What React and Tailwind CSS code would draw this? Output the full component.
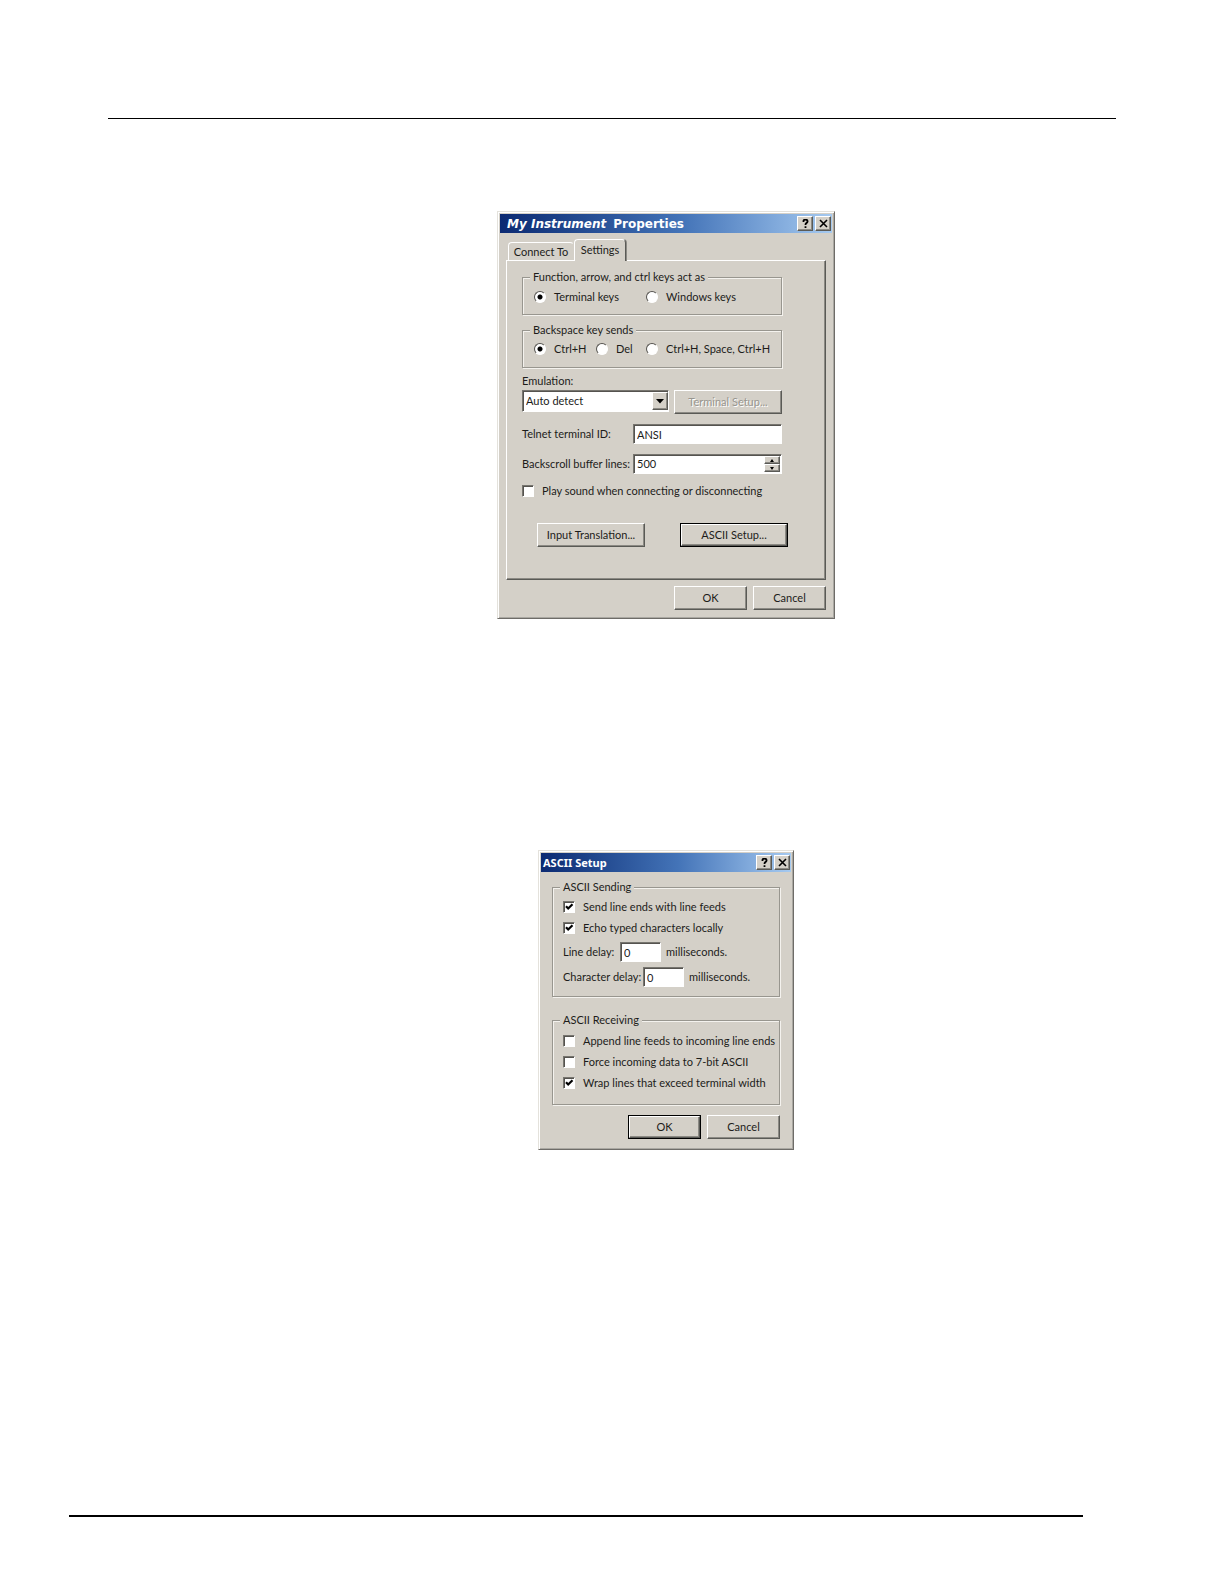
import { useId, useState } from 'react';

const RAISED = 'border border-t-white border-l-white border-r-[#5a5a56] border-b-[#5a5a56] shadow-[inset_-1px_-1px_0_#8c8a84]';
const SUNKEN = 'border border-t-[#77756f] border-l-[#77756f] border-r-white border-b-white bg-white shadow-[inset_1px_1px_0_#55534f]';

export default function App() {
    return (
        <div className="flex min-h-screen flex-col bg-white font-[Lato,'Liberation_Sans',sans-serif] text-[11px] leading-[14px] text-[#1c1c1a]">
            <hr className="mx-[108px] mt-[118px] border-t border-black" />
            <main className="flex flex-col items-center pl-[108px]">
                <PropertiesDialog />
                <AsciiDialog />
            </main>
            <hr className="mt-auto mr-[141px] mb-[67px] ml-[69px] border-t-2 border-black" />
        </div>
    );
}

function PropertiesDialog() {
    const [keys, setKeys] = useState('terminal');
    const [backspace, setBackspace] = useState('ctrlh');
    const [lines, setLines] = useState(500);

    return (
        <Dialog
            className="mt-[92px] w-[338px]"
            title={<><em>My Instrument</em><span className="ml-[7px]">Properties</span></>}
            titleClass="pl-[7px] font-['DejaVu_Sans',Verdana,sans-serif] text-[12px]"
        >
            <div className="px-[6px] pt-[6px] pb-[6px]">
                <div role="tablist" className="flex items-end pl-[2px]">
                    <button role="tab" aria-selected="false" className="h-[18px] w-[66px] rounded-t-sm border border-b-0 border-t-white border-l-white border-r-transparent whitespace-nowrap">
                        Connect To
                    </button>
                    <button role="tab" aria-selected="true" className="z-10 -mb-px h-[22px] w-[52px] rounded-t-sm border border-b-0 border-t-white border-l-white border-r-[#5a5a56] bg-[#d4d0c8] pb-[2px] shadow-[1px_0_0_#8c8a84]">
                        Settings
                    </button>
                </div>
                <div role="tabpanel" className={`${RAISED} flex flex-col pt-[9px] pr-[43px] pb-8 pl-[15px]`}>
                    <Group legend="Function, arrow, and ctrl keys act as" className="h-[45px]">
                        <div className="flex pt-[6px] pl-[11px]">
                            <Radio className="w-[112px]" name="keys" label="Terminal keys" checked={keys === 'terminal'} onChange={() => setKeys('terminal')} />
                            <Radio name="keys" label="Windows keys" checked={keys === 'windows'} onChange={() => setKeys('windows')} />
                        </div>
                    </Group>
                    <Group legend="Backspace key sends" className="mt-2 h-[45px]">
                        <div className="flex pt-[5px] pl-[11px]">
                            <Radio className="w-[62px]" name="backspace" label="Ctrl+H" checked={backspace === 'ctrlh'} onChange={() => setBackspace('ctrlh')} />
                            <Radio className="w-[50px]" name="backspace" label="Del" checked={backspace === 'del'} onChange={() => setBackspace('del')} />
                            <Radio name="backspace" label="Ctrl+H, Space, Ctrl+H" checked={backspace === 'space'} onChange={() => setBackspace('space')} />
                        </div>
                    </Group>

                    <label htmlFor="emulation" className="mt-[6px]">Emulation:</label>
                    <div className="mt-[2px] flex gap-[5px]">
                        <div className="relative flex-1">
                            <select id="emulation" className={`${SUNKEN} h-[22px] w-full appearance-none pl-[3px]`}>
                                <option>Auto detect</option>
                                <option>ANSI</option>
                                <option>VT100</option>
                            </select>
                            <span className={`${RAISED} pointer-events-none absolute top-[2px] right-px flex h-[18px] w-4 items-center justify-center bg-[#d4d0c8]`}>
                                <svg width="8" height="5" viewBox="0 0 8 5"><path d="M0 0h8L4 4.5z" fill="#000" /></svg>
                            </span>
                        </div>
                        <Button className="w-[108px]" disabled>Terminal Setup...</Button>
                    </div>

                    <div className="mt-[10px] flex items-center">
                        <label htmlFor="telnet" className="w-[111px]">Telnet terminal ID:</label>
                        <input id="telnet" defaultValue="ANSI" className={`${SUNKEN} h-5 min-w-0 flex-1 px-[3px]`} />
                    </div>
                    <div className="mt-[10px] flex items-center">
                        <label htmlFor="backscroll" className="w-[111px] whitespace-nowrap">Backscroll buffer lines:</label>
                        <div className={`${SUNKEN} flex h-5 min-w-0 flex-1 p-px`}>
                            <input
                                id="backscroll"
                                value={lines}
                                onChange={(e) => setLines(Number(e.target.value) || 0)}
                                className="min-w-0 flex-1 bg-transparent px-[2px] outline-none"
                            />
                            <div className="flex w-4 flex-col">
                                <SpinButton label="More lines" d="M0 3h4L2 0z" onClick={() => setLines(lines + 1)} />
                                <SpinButton label="Fewer lines" d="M0 0h4L2 3z" onClick={() => setLines(Math.max(0, lines - 1))} />
                            </div>
                        </div>
                    </div>
                    <Check className="mt-[10px]" label="Play sound when connecting or disconnecting" />

                    <div className="mt-[25px] -mr-[6px] flex justify-between pl-[15px]">
                        <Button className="w-[108px]">Input Translation...</Button>
                        <Button className="w-[108px]" primary>ASCII Setup...</Button>
                    </div>
                </div>
                <div className="mt-[6px] flex justify-end gap-[6px]">
                    <Button className="w-[73px]">OK</Button>
                    <Button className="w-[73px]">Cancel</Button>
                </div>
            </div>
        </Dialog>
    );
}

function AsciiDialog() {
    return (
        <Dialog className="mt-[231px] w-[256px]" title="ASCII Setup" titleClass="pl-[2px] font-['Noto_Sans',Tahoma,sans-serif] text-[11px]">
            <div className="px-[11px] pt-2 pb-2">
                <Group legend="ASCII Sending" className="h-[117px]">
                    <div className="flex flex-col pt-[6px] pl-[10px]">
                        <Check label="Send line ends with line feeds" defaultChecked />
                        <Check className="mt-[7px]" label="Echo typed characters locally" defaultChecked />
                        <Delay className="mt-[7px]" label="Line delay:" labelClass="w-[57px]" />
                        <Delay className="mt-[5px]" label="Character delay:" labelClass="w-[80px]" />
                    </div>
                </Group>
                <Group legend="ASCII Receiving" className="mt-4 h-[92px]">
                    <div className="flex flex-col gap-[7px] pt-[7px] pl-[10px]">
                        <Check label="Append line feeds to incoming line ends" />
                        <Check label="Force incoming data to 7-bit ASCII" />
                        <Check label="Wrap lines that exceed terminal width" defaultChecked />
                    </div>
                </Group>
                <div className="mt-[10px] flex justify-end gap-[6px]">
                    <Button className="w-[73px]" primary>OK</Button>
                    <Button className="w-[73px]">Cancel</Button>
                </div>
            </div>
        </Dialog>
    );
}

function Dialog({ className, title, titleClass, children }) {
    return (
        <section className={`border border-[#e4e2dc] border-r-[#6e6c68] border-b-[#6e6c68] bg-[#d4d0c8] p-[2px] shadow-[inset_1px_1px_0_#fff,inset_-1px_-1px_0_#aaa8a2] ${className}`}>
            <header className={`flex h-[19px] items-center bg-linear-to-r from-[#0c2a72] via-[#4474b8] via-55% to-[#a6caf0] pr-px font-bold text-white ${titleClass}`}>
                <h2 className="flex-1 whitespace-nowrap">{title}</h2>
                <TitleButton label="Help">
                    <path d="M2.5 3V1.8Q2.8.5 4.5.5T6.6 2.3Q6.6 3.4 5.4 4.1 4.5 4.7 4.5 6M4.5 7.2V9" fill="none" stroke="#000" strokeWidth="1.8" />
                </TitleButton>
                <TitleButton label="Close" className="ml-[2px]">
                    <path d="M1 1l7 7M8 1L1 8" fill="none" stroke="#000" strokeWidth="1.6" />
                </TitleButton>
            </header>
            {children}
        </section>
    );
}

function TitleButton({ label, className = '', children }) {
    return (
        <button aria-label={label} className={`${RAISED} flex h-[15px] w-4 items-center justify-center bg-[#d4d0c8] ${className}`}>
            <svg width="9" height="9" viewBox="0 0 9 9">{children}</svg>
        </button>
    );
}

function Group({ legend, className, children }) {
    return (
        <fieldset className={`border border-[#98968f] shadow-[1px_1px_0_#f4f2ee,inset_1px_1px_0_#f4f2ee] ${className}`}>
            <legend className="ml-[7px] bg-[#d4d0c8] px-[3px]">{legend}</legend>
            {children}
        </fieldset>
    );
}

function Radio({ label, className = '', ...props }) {
    const id = useId();
    return (
        <div className={`flex items-center gap-2 whitespace-nowrap ${className}`}>
            <input
                type="radio"
                id={id}
                className="size-3 shrink-0 appearance-none rounded-full border border-t-[#55534f] border-l-[#55534f] border-r-white border-b-white bg-white checked:bg-[radial-gradient(circle,#000_2px,#fff_3px)]"
                {...props}
            />
            <label htmlFor={id}>{label}</label>
        </div>
    );
}

function Check({ label, className = '', defaultChecked }) {
    const id = useId();
    return (
        <div className={`flex items-center whitespace-nowrap ${className}`}>
            <span className="relative flex shrink-0">
                <input type="checkbox" id={id} defaultChecked={defaultChecked} className={`${SUNKEN} peer size-3 appearance-none`} />
                <svg className="pointer-events-none absolute inset-0 hidden peer-checked:block" width="12" height="12" viewBox="0 0 12 12">
                    <path d="M3 5.2l2.2 2.3L9.5 3.2" fill="none" stroke="#000" strokeWidth="2.2" />
                </svg>
            </span>
            <label htmlFor={id} className="pl-2">{label}</label>
        </div>
    );
}

function Delay({ label, labelClass, className }) {
    const id = useId();
    return (
        <div className={`flex items-center whitespace-nowrap ${className}`}>
            <label htmlFor={id} className={labelClass}>{label}</label>
            <input id={id} defaultValue="0" className={`${SUNKEN} h-5 w-[41px] px-[3px]`} />
            <span className="ml-[5px]">milliseconds.</span>
        </div>
    );
}

function SpinButton({ label, d, onClick }) {
    return (
        <button aria-label={label} onClick={onClick} className={`${RAISED} flex flex-1 items-center justify-center bg-[#d4d0c8]`}>
            <svg width="4" height="3" viewBox="0 0 4 3"><path d={d} fill="#000" /></svg>
        </button>
    );
}

function Button({ className, primary, disabled, children }) {
    return (
        <div className={`flex h-6 ${primary ? 'border border-black' : ''} ${className}`}>
            <button disabled={disabled} className={`${RAISED} flex-1 whitespace-nowrap disabled:text-[#98968f] disabled:[text-shadow:1px_1px_0_#fff]`}>
                {children}
            </button>
        </div>
    );
}
